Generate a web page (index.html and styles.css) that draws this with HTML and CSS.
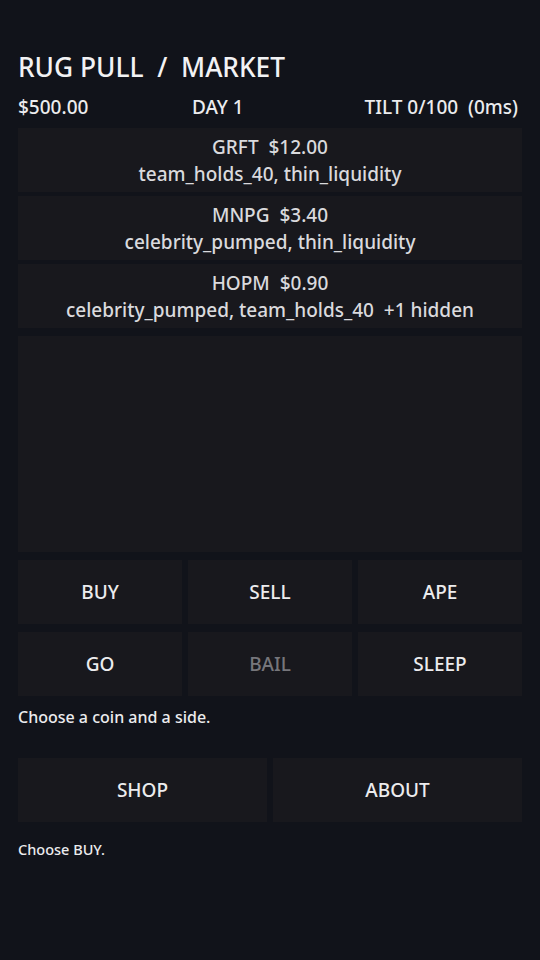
FILE: index.html
```html
<!DOCTYPE html>
<html lang="en">
<head>
<meta charset="utf-8">
<title>Rug Pull / Market</title>
<link rel="stylesheet" href="styles.css">
</head>
<body>
<main class="app">
  <h1 class="title">RUG PULL &nbsp;/&nbsp; MARKET</h1>
  <div class="stats">
    <span class="stat stat-cash">$500.00</span>
    <span class="stat stat-day">DAY 1</span>
    <span class="stat stat-tilt">TILT 0/100 &nbsp;(0ms)</span>
  </div>
  <ul class="coins">
    <li class="coin">
      <div class="coin-head">GRFT &nbsp;$12.00</div>
      <div class="coin-tags">team_holds_40, thin_liquidity</div>
    </li>
    <li class="coin">
      <div class="coin-head">MNPG &nbsp;$3.40</div>
      <div class="coin-tags">celebrity_pumped, thin_liquidity</div>
    </li>
    <li class="coin">
      <div class="coin-head">HOPM &nbsp;$0.90</div>
      <div class="coin-tags">celebrity_pumped, team_holds_40 &nbsp;+1 hidden</div>
    </li>
  </ul>
  <div class="chart"></div>
  <div class="actions">
    <button class="btn">BUY</button>
    <button class="btn">SELL</button>
    <button class="btn">APE</button>
    <button class="btn">GO</button>
    <button class="btn btn-disabled" disabled>BAIL</button>
    <button class="btn">SLEEP</button>
  </div>
  <p class="status">Choose a coin and a side.</p>
  <div class="nav">
    <button class="btn">SHOP</button>
    <button class="btn">ABOUT</button>
  </div>
  <p class="hint">Choose BUY.</p>
</main>
</body>
</html>
```

FILE: styles.css
```css
* { box-sizing: border-box; }

html, body {
  margin: 0;
  padding: 0;
  background: #11131a;
}

body {
  font-family: "Noto Sans", "Open Sans", "DejaVu Sans", sans-serif;
  color: #ececee;
}

.app {
  padding: 50px 18px 40px;
}

.title {
  margin: 0;
  font-size: 26.3px;
  line-height: 34px;
  font-weight: 500;
  color: #f2f2f4;
  white-space: nowrap;
}

.stats {
  margin-top: 11px;
  display: grid;
  grid-template-columns: 1fr 1fr 1fr;
  font-size: 19px;
  line-height: 24px;
  font-weight: 500;
  white-space: nowrap;
}

.stat-day { padding-left: 6px; }
.stat-tilt { text-align: right; padding-right: 4px; }

.coins {
  list-style: none;
  margin: 9px 0 0;
  padding: 0;
  display: flex;
  flex-direction: column;
  gap: 4px;
}

.coin {
  height: 64px;
  padding: 6px 8px 4px;
  background: #18181d;
  text-align: center;
  font-size: 19px;
  line-height: 27px;
  font-weight: 500;
  color: #dadadd;
}

.coin-head, .coin-tags { white-space: nowrap; }

.chart {
  margin-top: 8px;
  height: 216px;
  background: #18181d;
}

.actions {
  margin-top: 8px;
  display: grid;
  grid-template-columns: repeat(3, 1fr);
  grid-auto-rows: 64px;
  column-gap: 6px;
  row-gap: 8px;
}

.btn {
  border: 0;
  margin: 0;
  padding: 0;
  background: #18181d;
  color: #ececee;
  font-family: inherit;
  font-size: 19px;
  font-weight: 500;
}

.btn-disabled { color: #76767b; }

.status {
  margin: 10px 0 0;
  font-size: 16px;
  line-height: 22px;
  font-weight: 500;
}

.nav {
  margin-top: 30px;
  display: grid;
  grid-template-columns: 1fr 1fr;
  grid-auto-rows: 64px;
  column-gap: 6px;
}

.hint {
  margin: 17px 0 0;
  font-size: 14.5px;
  line-height: 20px;
  font-weight: 500;
}
```
